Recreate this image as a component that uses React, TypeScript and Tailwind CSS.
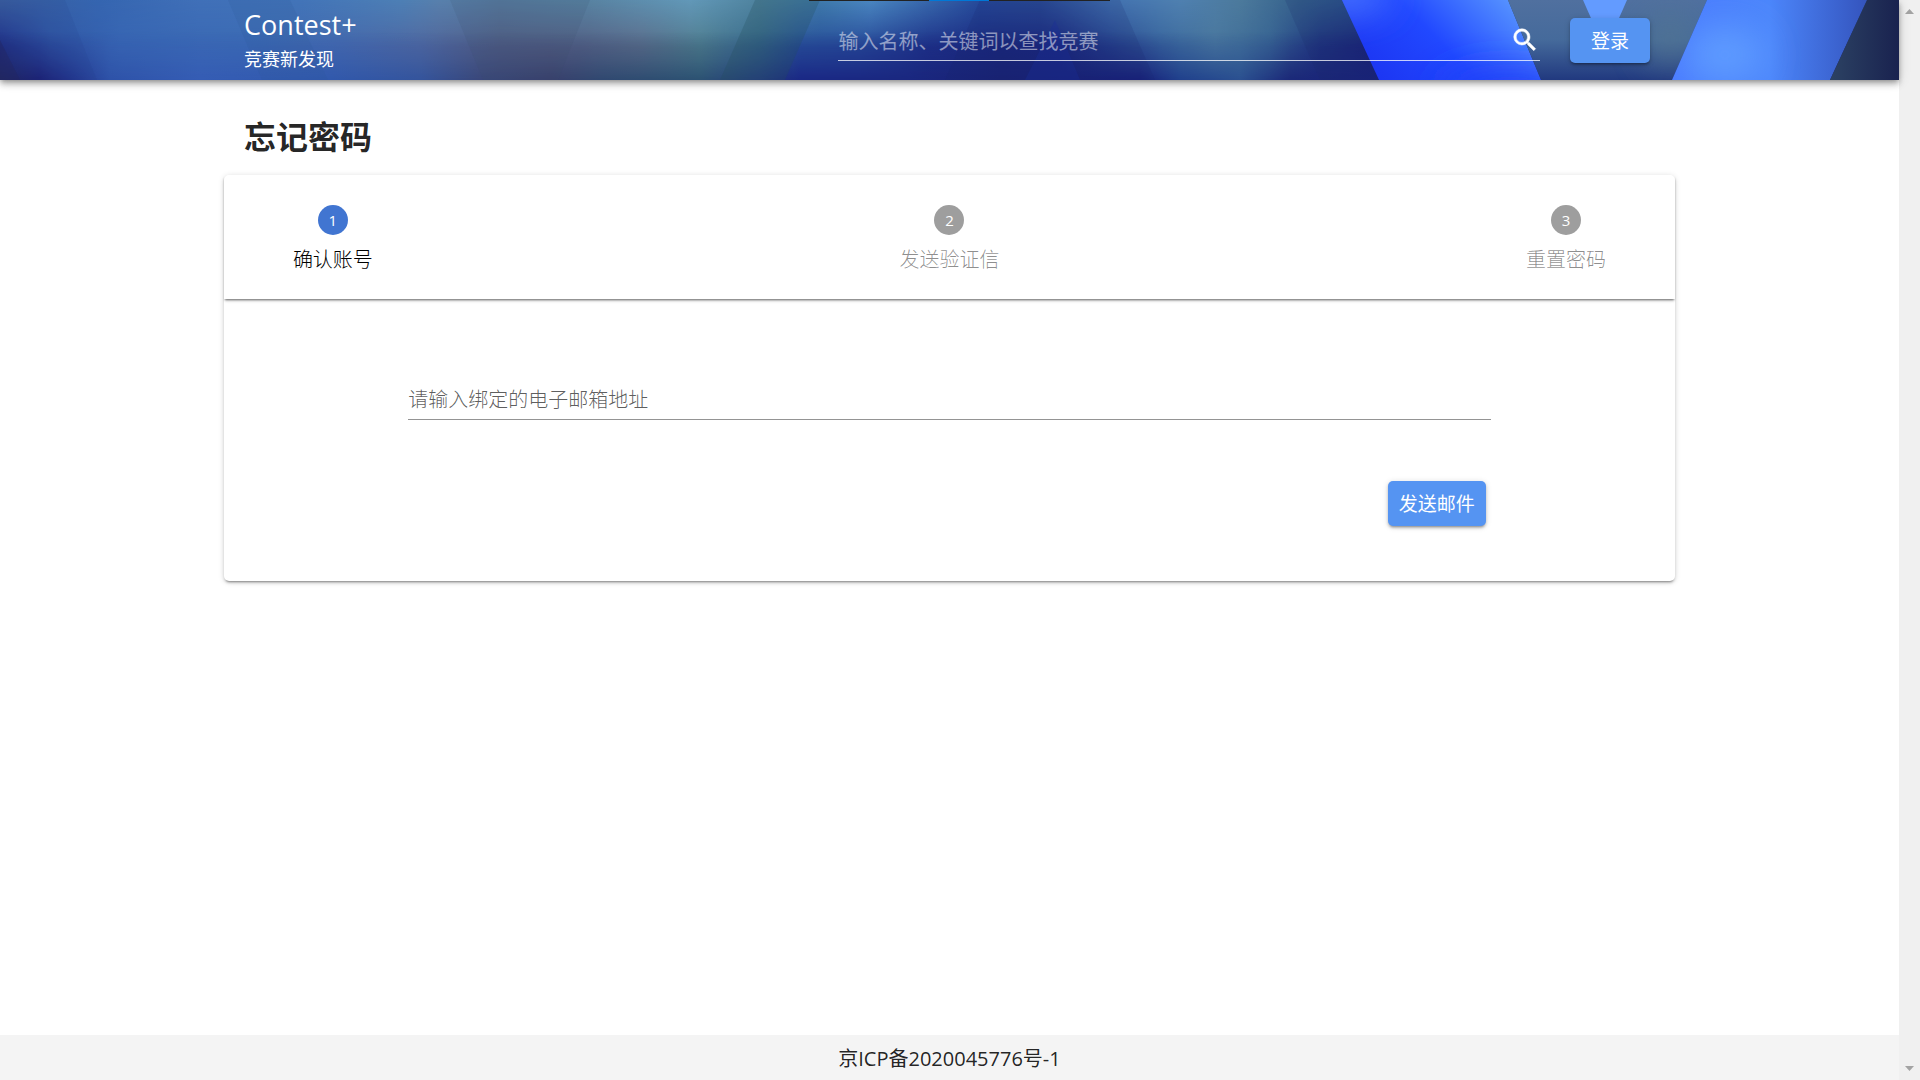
const ART_WIDTH = 1899;

type Stop = [number, string];

const topTones: Stop[] = [
  [0, "#3a5f9f"], [100, "#3565b0"], [200, "#4070b8"], [300, "#4274b8"], [400, "#4d7fb5"],
  [440, "#5880ac"], [500, "#567a9e"], [590, "#5883a2"], [690, "#6298b8"], [760, "#4f839e"],
  [820, "#3f7aab"], [870, "#4a86c0"], [920, "#3a6cae"], [980, "#264a9a"], [1040, "#2a4c96"],
  [1110, "#4272b0"], [1180, "#4f80b0"], [1240, "#4c7a9c"], [1300, "#35618c"], [1360, "#28508a"],
];

const midTones: Stop[] = [
  [0, "#1f2f8c"], [50, "#2f55a5"], [120, "#3866b4"], [250, "#3b6ab4"], [340, "#4569ad"],
  [420, "#5068a0"], [500, "#525e85"], [580, "#546085"], [640, "#5c6c8a"], [700, "#4f7d8e"],
  [760, "#36698c"], [800, "#28529a"], [860, "#264a98"], [930, "#1d3088"], [1000, "#1a287e"],
  [1060, "#1b2880"], [1110, "#27458f"], [1160, "#38659c"], [1215, "#4a789e"], [1270, "#386594"],
  [1320, "#1f3480"], [1370, "#1a2278"],
];

const bottomTones: Stop[] = [
  [0, "#20265f"], [40, "#1c2074"], [70, "#22348c"], [110, "#2e52a8"], [200, "#355cb4"],
  [330, "#3158ac"], [420, "#34549c"], [480, "#39477a"], [550, "#383f6c"], [600, "#304870"],
  [700, "#2c5272"], [760, "#243c80"], [800, "#1a2785"], [900, "#1a2780"], [1000, "#192274"],
  [1140, "#18207a"], [1180, "#20408c"], [1240, "#2a5090"], [1290, "#1b2878"], [1390, "#18207a"],
];

function ToneGradient({ id, tones }: { id: string; tones: Stop[] }) {
  return (
    <linearGradient id={id} gradientUnits="userSpaceOnUse" x1="0" y1="0" x2={ART_WIDTH} y2="0">
      {tones.map(([x, color]) => (
        <stop key={x} offset={x / ART_WIDTH} stopColor={color} />
      ))}
    </linearGradient>
  );
}

function HeaderArt() {
  return (
    <svg
      className="absolute inset-0 h-full w-full"
      viewBox="0 0 1899 80"
      preserveAspectRatio="none"
      aria-hidden="true"
    >
      <defs>
        <ToneGradient id="top" tones={topTones} />
        <ToneGradient id="mid" tones={midTones} />
        <ToneGradient id="bottom" tones={bottomTones} />
        <linearGradient id="fadeDown" x1="0" y1="0" x2="0" y2="1">
          <stop offset="0" stopColor="#fff" />
          <stop offset="0.25" stopColor="#999" />
          <stop offset="0.6" stopColor="#000" />
        </linearGradient>
        <linearGradient id="fadeUp" x1="0" y1="1" x2="0" y2="0">
          <stop offset="0" stopColor="#fff" />
          <stop offset="0.25" stopColor="#888" />
          <stop offset="0.6" stopColor="#000" />
        </linearGradient>
        <mask id="topMask">
          <rect width="1899" height="80" fill="url(#fadeDown)" />
        </mask>
        <mask id="bottomMask">
          <rect width="1899" height="80" fill="url(#fadeUp)" />
        </mask>
        <linearGradient id="brightA" x1="0" y1="0.6" x2="1" y2="0.2">
          <stop offset="0" stopColor="#1c35f2" />
          <stop offset="0.45" stopColor="#2148ff" />
          <stop offset="1" stopColor="#5d9cff" />
        </linearGradient>
        <linearGradient id="brightB" x1="0" x2="1">
          <stop offset="0" stopColor="#4a7bff" />
          <stop offset="0.5" stopColor="#4c86fb" />
          <stop offset="1" stopColor="#3454bd" />
        </linearGradient>
        <linearGradient id="slate" x1="0" y1="0" x2="0" y2="1">
          <stop offset="0" stopColor="#50709f" />
          <stop offset="0.5" stopColor="#456a9b" />
          <stop offset="1" stopColor="#21397f" />
        </linearGradient>
        <linearGradient id="night" x1="0" x2="1">
          <stop offset="0" stopColor="#2c4263" />
          <stop offset="1" stopColor="#19224f" />
        </linearGradient>
        <filter id="soft" filterUnits="userSpaceOnUse" x="1200" y="-100" width="800" height="280">
          <feGaussianBlur stdDeviation="18" />
        </filter>
        <clipPath id="clipA">
          <polygon points="1342,0 1508,0 1541,80 1379,80" />
        </clipPath>
        <clipPath id="clipB">
          <polygon points="1707,0 1867,0 1830,80 1672,80" />
        </clipPath>
      </defs>
      <rect width="1899" height="80" fill="url(#mid)" />
      <rect width="1899" height="80" fill="url(#top)" mask="url(#topMask)" />
      <rect width="1899" height="80" fill="url(#bottom)" mask="url(#bottomMask)" />
      <polygon points="0,0 65,0 97,80 0,80" fill="#1f3a86" opacity="0.12" />
      <polygon points="0,40 20,80 0,80" fill="#23265f" opacity="0.4" />
      <polygon points="228,0 290,0 328,80 262,80" fill="#2c5598" opacity="0.16" />
      <polygon points="450,0 590,0 558,80 483,80" fill="#3a4f6c" opacity="0.14" />
      <polygon points="755,0 820,0 785,80 720,80" fill="#214f5a" opacity="0.26" />
      <polygon points="980,0 1120,0 1155,80 945,80" fill="#19236a" opacity="0.16" />
      <polygon points="1055,20 1080,80 1025,80" fill="#1b2f98" opacity="0.35" />
      <polygon points="1285,0 1342,0 1379,80 1320,80" fill="#1b2d68" opacity="0.18" />
      <polygon points="1342,0 1508,0 1541,80 1379,80" fill="url(#brightA)" />
      <g clipPath="url(#clipA)">
        <ellipse cx="1345" cy="-5" rx="45" ry="18" fill="#4c78ff" filter="url(#soft)" />
        <ellipse cx="1510" cy="92" rx="70" ry="22" fill="#2040f5" filter="url(#soft)" />
      </g>
      <polygon points="1508,0 1707,0 1672,80 1541,80" fill="url(#slate)" />
      <ellipse cx="1670" cy="40" rx="24" ry="26" fill="#56788e" opacity="0.7" filter="url(#soft)" />
      <polygon points="1583,0 1627,0 1605,50" fill="#639bff" />
      <polygon points="1707,0 1867,0 1830,80 1672,80" fill="url(#brightB)" />
      <g clipPath="url(#clipB)">
        <ellipse cx="1725" cy="55" rx="40" ry="28" fill="#5e9cff" filter="url(#soft)" />
      </g>
      <polygon points="1867,0 1899,0 1899,80 1830,80" fill="url(#night)" />
    </svg>
  );
}

function SearchIcon() {
  return (
    <svg
      viewBox="0 0 24 24"
      className="h-[30px] w-[30px] fill-white stroke-white"
      strokeWidth="0.4"
      aria-hidden="true"
    >
      <path d="M9.5 3A6.5 6.5 0 0 1 16 9.500c0 1.610-.59 3.090-1.560 4.230l.27.270h.790l5 5-1.500 1.500-5-5v-.790l-.27-.270A6.516 6.516 0 0 1 9.500 16a6.500 6.500 0 0 1 0-13m0 2C7 5 5 7 5 9.500S7 14 9.500 14 14 12 14 9.500 12 5 9.500 5z" />
    </svg>
  );
}

const steps = ["确认账号", "发送验证信", "重置密码"];

const buttonClass =
  "h-[45px] rounded-[5px] bg-[#5594f2] pt-0.5 text-[19px] text-white shadow-[0_3px_2px_-2px_rgba(0,0,0,0.2),0_2px_3px_rgba(0,0,0,0.2),0_1px_6px_rgba(0,0,0,0.14)]";

export default function App() {
  return (
    <div className="flex min-h-screen bg-white font-['Open_Sans','Noto_Sans_CJK_SC',sans-serif] text-black/87">
      <div className="flex min-w-0 flex-1 flex-col">
        <header className="relative h-20 shadow-[0_2px_5px_-1px_rgba(0,0,0,0.3),0_5px_6px_rgba(0,0,0,0.16),0_1px_12px_rgba(0,0,0,0.14)]">
          <HeaderArt />
          <div className="absolute top-0 left-1/2 ml-[-141px] flex h-px w-[301px] justify-center bg-[#222]" aria-hidden="true">
            <div className="w-[60px] bg-[#0078d7]" />
          </div>
          <div className="relative mx-auto flex h-full w-[76.4%] items-center pr-[25px] pl-5">
            <a href="#" className="flex flex-col pt-1 text-white">
              <span className="text-[27px] leading-[34px]">Contest+</span>
              <span className="text-[18px] leading-[34px]">竞赛新发现</span>
            </a>
            <form className="mr-[30px] ml-auto flex h-[42px] w-[49.9%] items-center border-b border-white/75">
              <input
                type="search"
                aria-label="搜索竞赛"
                placeholder="输入名称、关键词以查找竞赛"
                className="min-w-0 flex-1 bg-transparent pt-1 text-[20px] text-white outline-none placeholder:text-white/50"
              />
              <button type="button" aria-label="搜索">
                <SearchIcon />
              </button>
            </form>
            <button type="button" className={`${buttonClass} w-20`}>
              登录
            </button>
          </div>
        </header>

        <main className="mx-auto w-[76.4%] flex-1 pt-8">
          <h1 className="px-5 pt-px text-[32px] leading-[48px] font-bold">忘记密码</h1>
          <section className="mt-3.5 rounded-[5px] shadow-[0_3px_2px_-2px_rgba(0,0,0,0.3),0_2px_3px_rgba(0,0,0,0.14),0_1px_6px_rgba(0,0,0,0.14)]">
            <ol className="flex justify-between pt-[30px] pb-[27px] shadow-[0_2px_2px_-1px_rgba(0,0,0,0.5),0_3px_3px_-1px_rgba(0,0,0,0.15)]">
              {steps.map((label, i) => (
                <li key={label} className="flex w-[15%] flex-col items-center gap-[13px]">
                  <span
                    className={`flex h-[30px] w-[30px] items-center justify-center rounded-full text-[15px] font-medium text-white ${i === 0 ? "bg-[#4175d1]" : "bg-[#9e9e9e]"}`}
                  >
                    {i + 1}
                  </span>
                  <span
                    className={`text-[20px] leading-6 font-light ${i === 0 ? "text-black" : "text-black/45"}`}
                  >
                    {label}
                  </span>
                </li>
              ))}
            </ol>
            <form className="mx-auto flex w-[74.6%] flex-col pt-20 pb-[55px]">
              <input
                type="email"
                aria-label="电子邮箱地址"
                placeholder="请输入绑定的电子邮箱地址"
                className="h-[41px] w-full border-b border-[#949494] bg-transparent text-[20px] font-light outline-none placeholder:text-black/65"
              />
              <button type="button" className={`${buttonClass} mt-[61px] mr-[5px] w-[98px] self-end`}>
                发送邮件
              </button>
            </form>
          </section>
        </main>

        <footer className="flex h-[45px] items-center justify-center bg-[#f4f4f4] pt-0.5 text-[20px]">
          <a href="#" className="text-black/87">京ICP备2020045776号-1</a>
        </footer>
      </div>
      <div className="flex w-[21px] shrink-0 flex-col items-center justify-between bg-[#f0f0f0] py-2" aria-hidden="true">
        <svg viewBox="0 0 9 5" className="mt-px h-[5px] w-[9px] fill-[#a3a3a3]">
          <path d="M4.500 0L9 5H0z" />
        </svg>
        <svg viewBox="0 0 9 5" className="mb-px h-[5px] w-[9px] fill-[#a3a3a3]">
          <path d="M0 0h9L4.500 5z" />
        </svg>
      </div>
    </div>
  );
}
